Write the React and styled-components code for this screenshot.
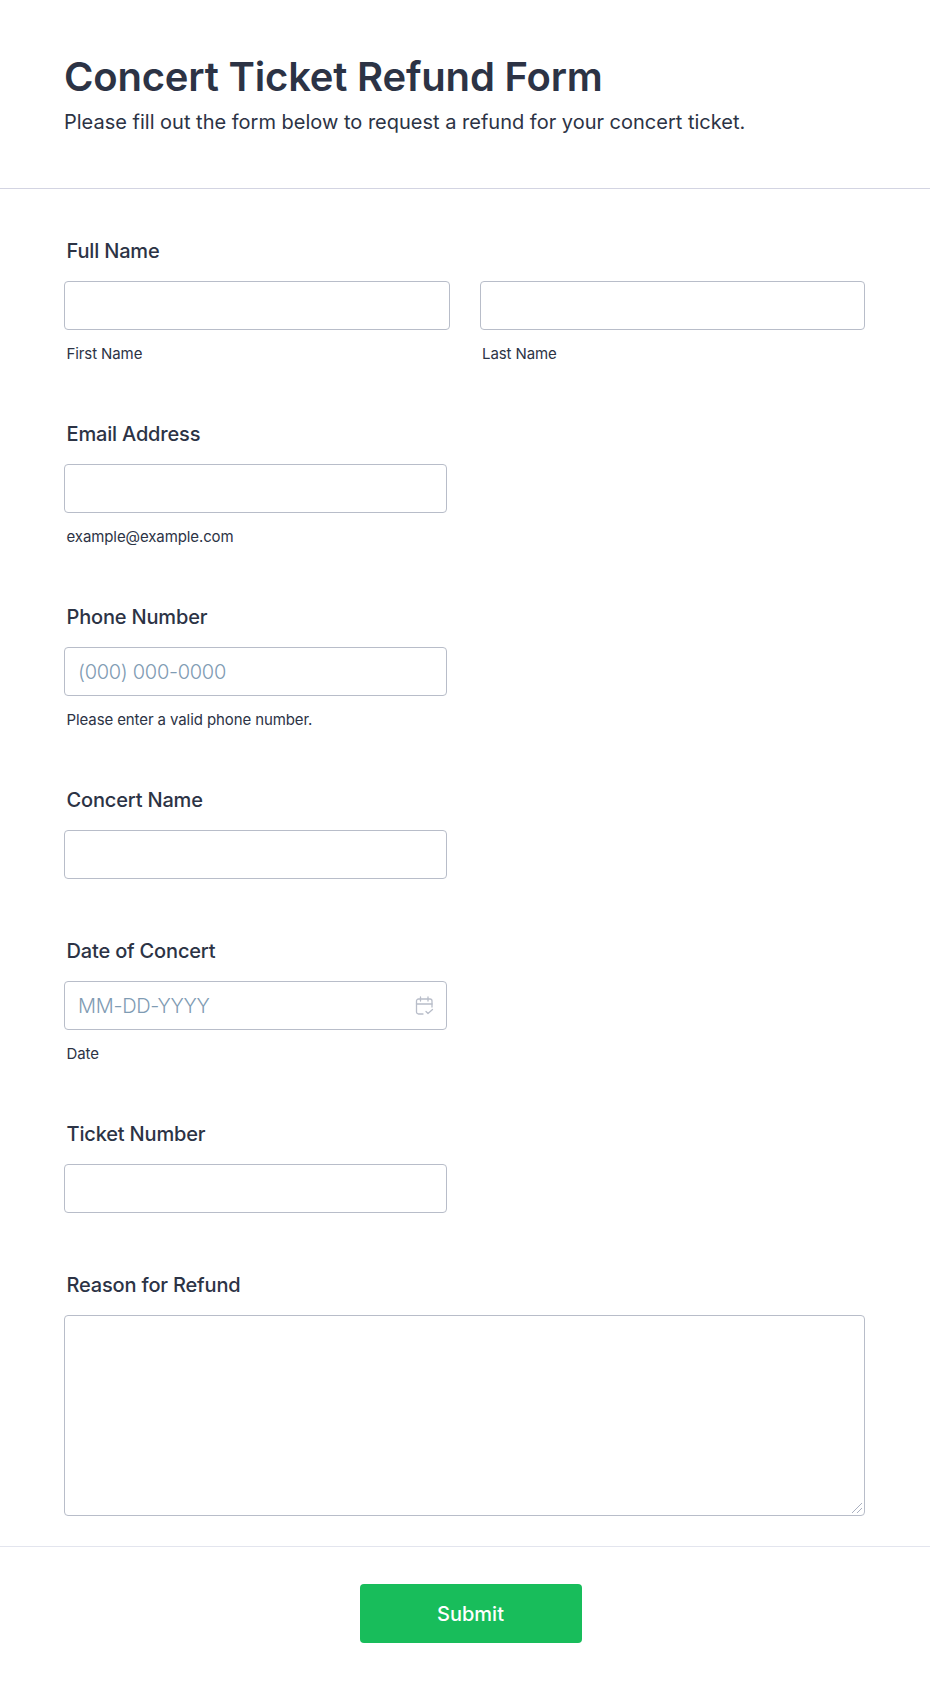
import React from "react";
import styled, { createGlobalStyle } from "styled-components";

const Global = createGlobalStyle`
  html, body { margin: 0; padding: 0; background: #fff; }
  body { font-family: Inter, "Liberation Sans", sans-serif; color: #2c3345; }
  * { box-sizing: border-box; }
`;

const Page = styled.form`
  width: 930px;
  height: 1693px;
  background: #fff;
`;
const Header = styled.header`
  height: 189px;
  padding: 53px 64px 0;
  border-bottom: 1px solid #d3d4e2;
`;
const Title = styled.h1`
  margin: 0;
  font-size: 40px;
  line-height: 48px;
  font-weight: 600;
  letter-spacing: -0.19px;
  color: #2c3345;
`;
const Subtitle = styled.p`
  margin: 7px 0 0;
  font-size: 20px;
  line-height: 28px;
  font-weight: 400;
  color: #2c3345;
`;
const Fields = styled.div`
  padding: 48px 64px 0;
  display: flex;
  flex-direction: column;
  height: 1357px;
`;
const Field = styled.div`
  height: ${(p) => p.$height}px;
  flex: none;
`;
const Label = styled.label`
  display: block;
  padding-left: 2.5px;
  font-size: 20px;
  line-height: 28px;
  font-weight: 500;
  letter-spacing: -0.17px;
  color: #2c3345;
  margin-bottom: 16px;
`;
const Row = styled.div`
  display: grid;
  grid-template-columns: 385.5px 385.5px;
  gap: 30px;
`;
const Input = styled.input`
  display: block;
  width: ${(p) => p.$width || "383px"};
  height: 49px;
  padding: 0 13px;
  border: 1px solid #b8bdc9;
  border-radius: 4px;
  background: #fff;
  font: 300 20px Inter, sans-serif;
  letter-spacing: -0.3px;
  color: #2c3345;
  outline: none;
  &::placeholder { color: #7f9bb3; opacity: 1; }
`;
const Sub = styled.span`
  display: block;
  margin-top: 15px;
  padding-left: 2.5px;
  font-size: 15px;
  line-height: 18px;
  letter-spacing: -0.1px;
  color: #2c3345;
`;
const DateWrap = styled.div`
  position: relative;
  width: 383px;
`;
const CalIcon = styled.svg`
  position: absolute;
  right: 13px;
  top: 15px;
  width: 19px;
  height: 20px;
`;
const Area = styled.textarea`
  display: block;
  width: 801px;
  height: 201px;
  padding: 12px;
  border: 1px solid #b8bdc9;
  border-radius: 4px;
  background: #fff;
  outline: none;
  resize: vertical;
  &::-webkit-resizer {
    background:
      linear-gradient(135deg, transparent 46%, #aab0c0 46%, #aab0c0 54%, transparent 54%) 3px 3px / 10px 10px no-repeat,
      linear-gradient(135deg, transparent 46%, #aab0c0 46%, #aab0c0 54%, transparent 54%) 8px 8px / 5px 5px no-repeat;
  }
`;
const Footer = styled.footer`
  border-top: 1px solid #e3e5ee;
  display: flex;
  justify-content: center;
  padding: 37px 0 0 11px;
`;
const Submit = styled.button`
  width: 222px;
  height: 59px;
  border: 0;
  border-radius: 4px;
  background: #18bd5b;
  color: #fff;
  font: 500 20px Inter, sans-serif;
`;

export default function App() {
  return (
    <>
      <Global />
      <Page onSubmit={(e) => e.preventDefault()}>
        <Header>
          <Title>Concert Ticket Refund Form</Title>
          <Subtitle>Please fill out the form below to request a refund for your concert ticket.</Subtitle>
        </Header>
        <Fields>
          <Field $height={183}>
            <Label>Full Name</Label>
            <Row>
              <div>
                <Input $width="385.5px" />
                <Sub>First Name</Sub>
              </div>
              <div>
                <Input $width="385.5px" />
                <Sub>Last Name</Sub>
              </div>
            </Row>
          </Field>
          <Field $height={183}>
            <Label>Email Address</Label>
            <Input />
            <Sub>example@example.com</Sub>
          </Field>
          <Field $height={183}>
            <Label>Phone Number</Label>
            <Input placeholder="(000) 000-0000" />
            <Sub>Please enter a valid phone number.</Sub>
          </Field>
          <Field $height={151}>
            <Label>Concert Name</Label>
            <Input />
          </Field>
          <Field $height={183}>
            <Label>Date of Concert</Label>
            <DateWrap>
              <Input placeholder="MM-DD-YYYY" />
              <CalIcon viewBox="0 0 19 20" fill="none" stroke="#b8bdc9" strokeWidth="1.3" strokeLinecap="round" strokeLinejoin="round">
                <path d="M8 18H3.5A2 2 0 0 1 1.5 16V5A2 2 0 0 1 3.5 3H15A2 2 0 0 1 17 5V11" />
                <path d="M1.5 8H17M5.5 1V5M13 1V5" />
                <path d="M11 15.5L13 17.5L17.5 13.5" />
              </CalIcon>
            </DateWrap>
            <Sub>Date</Sub>
          </Field>
          <Field $height={151}>
            <Label>Ticket Number</Label>
            <Input />
          </Field>
          <Field $height={200}>
            <Label>Reason for Refund</Label>
            <Area />
          </Field>
        </Fields>
        <Footer>
          <Submit type="submit">Submit</Submit>
        </Footer>
      </Page>
    </>
  );
}
